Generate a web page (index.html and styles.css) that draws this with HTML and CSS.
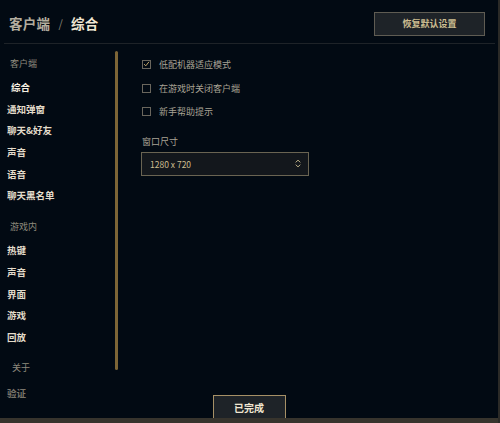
FILE: index.html
```html
<!DOCTYPE html>
<html lang="zh-CN">
<head>
    <meta charset="UTF-8">
    <meta name="viewport" content="width=device-width, initial-scale=1.0">
    <title>客户端设置</title>
    <link rel="stylesheet" href="styles.css">
</head>
<body>
    <div class="window">
        <!-- Cabeçalho -->
        <header class="topbar">
            <h1 class="crumb">
                <span class="crumb-parent">客户端</span>
                <span class="crumb-sep">/</span>
                <span class="crumb-current">综合</span>
            </h1>
            <button class="btn-reset">恢复默认设置</button>
        </header>

        <div class="panel">
            <!-- Menu lateral -->
            <nav class="sidebar">
                <div class="group-label">客户端</div>
                <div class="nav-item active">综合</div>
                <div class="nav-item">通知弹窗</div>
                <div class="nav-item">聊天&amp;好友</div>
                <div class="nav-item">声音</div>
                <div class="nav-item">语音</div>
                <div class="nav-item">聊天黑名单</div>

                <div class="group-label group-gap">游戏内</div>
                <div class="nav-item">热键</div>
                <div class="nav-item">声音</div>
                <div class="nav-item">界面</div>
                <div class="nav-item">游戏</div>
                <div class="nav-item">回放</div>

                <div class="group-label group-gap about">关于</div>
                <div class="nav-item faded">验证</div>
            </nav>

            <div class="scrollbar"><div class="thumb"></div></div>

            <!-- Opções -->
            <section class="content">
                <label class="check-row">
                    <span class="box checked">
                        <svg viewBox="0 0 10 10" width="8" height="8"><path d="M1.5 5.2 L4 7.6 L8.6 1.8" fill="none" stroke="#c8aa6e" stroke-width="1.4"/></svg>
                    </span>
                    低配机器适应模式
                </label>
                <label class="check-row">
                    <span class="box"></span>
                    在游戏时关闭客户端
                </label>
                <label class="check-row">
                    <span class="box"></span>
                    新手帮助提示
                </label>

                <div class="field-label">窗口尺寸</div>
                <div class="select">
                    <span>1280 x 720</span>
                    <svg viewBox="0 0 8 12" width="6" height="9"><path d="M1 4.5 L4 1.5 L7 4.5 M1 7.5 L4 10.5 L7 7.5" fill="none" stroke="#cdbe91" stroke-width="1.3"/></svg>
                </div>
            </section>
        </div>

        <!-- Rodapé -->
        <footer class="footer">
            <button class="btn-done">已完成</button>
        </footer>
    </div>
</body>
</html>
```

FILE: styles.css
```css
/* Estilo Geral */
body {
    margin: 0;
    padding: 0;
    background-color: #010a13;
    font-family: "Noto Sans CJK SC", "Noto Sans", sans-serif;
    overflow: hidden;
}

.window {
    width: 498px;
    height: 423px;
    display: flex;
    flex-direction: column;
    border-right: 2px solid #2b2a27;
    background-color: #020a13;
}

/* Cabeçalho */
.topbar {
    height: 44px;
    flex-shrink: 0;
    margin: 0 3px 0 4px;
    padding: 0 10px 0 5px;
    display: flex;
    align-items: center;
    justify-content: space-between;
    border-bottom: 1px solid #1e2328;
    box-sizing: border-box;
}

.crumb {
    margin: 0;
    font-size: 13.5px;
    font-weight: bold;
    display: flex;
    align-items: center;
    gap: 6px;
    letter-spacing: 0.3px;
    padding-top: 2px;
}

.crumb-parent {
    color: #b3ad9f;
}

.crumb-sep {
    color: #8a8577;
    font-weight: normal;
    font-size: 11px;
    margin: 0 2px;
}

.crumb-current {
    color: #f0e6d2;
}

.btn-reset {
    width: 111px;
    height: 24px;
    margin-top: 4px;
    background-color: #1e2328;
    border: 1px solid #5f5c53;
    color: #cdbe91;
    font-family: inherit;
    font-size: 9px;
    font-weight: bold;
    padding: 0;
}

/* Painel */
.panel {
    flex: 1;
    display: flex;
    min-height: 0;
}

.sidebar {
    width: 115px;
    padding-top: 10px;
    box-sizing: border-box;
}

.group-label {
    height: 20px;
    line-height: 20px;
    padding-left: 10px;
    font-size: 9px;
    color: #8f8a7e;
    margin-bottom: 3px;
}

.group-gap {
    margin-top: 10px;
}

.about {
    margin-top: 9px;
    padding-left: 12px;
    margin-bottom: 5px;
}

.nav-item {
    height: 21.7px;
    line-height: 21.7px;
    padding-left: 7px;
    font-size: 9.5px;
    font-weight: bold;
    color: #e3dccb;
}

.nav-item.active {
    padding-left: 11px;
    color: #f7f1e2;
}

.nav-item.faded {
    color: #77736a;
}

.scrollbar {
    width: 4px;
    padding-top: 7px;
}

.thumb {
    width: 3px;
    height: 319px;
    background-color: #7d6536;
    border-radius: 2px;
}

/* Opções */
.content {
    flex: 1;
    padding: 9px 0 0 23px;
}

.check-row {
    display: flex;
    align-items: center;
    height: 23.5px;
    font-size: 9px;
    color: #a9a395;
}

.box {
    width: 7px;
    height: 7px;
    border: 1px solid #6a665d;
    margin-right: 8px;
    display: flex;
    align-items: center;
    justify-content: center;
}

.box svg {
    margin-top: -1px;
}

.field-label {
    margin-top: 11px;
    font-size: 9px;
    color: #a9a395;
    height: 14px;
    line-height: 14px;
}

.select {
    width: 168px;
    height: 24px;
    margin-top: 3px;
    margin-left: -1px;
    border: 1px solid #6a6452;
    background-color: #13171c;
    display: flex;
    align-items: center;
    justify-content: space-between;
    padding: 0 7px 0 8px;
    box-sizing: border-box;
    font-size: 8.5px;
    color: #cdbe91;
}

/* Rodapé */
.footer {
    height: 23px;
    flex-shrink: 0;
    display: flex;
    justify-content: center;
    align-items: flex-start;
    border-bottom: 5px solid #37342d;
}

.btn-done {
    width: 73px;
    height: 23px;
    background-color: #1e2328;
    border: 1px solid #a69066;
    border-bottom: none;
    color: #f0e6d2;
    font-family: inherit;
    font-size: 10px;
    font-weight: bold;
    padding: 0;
}
```
